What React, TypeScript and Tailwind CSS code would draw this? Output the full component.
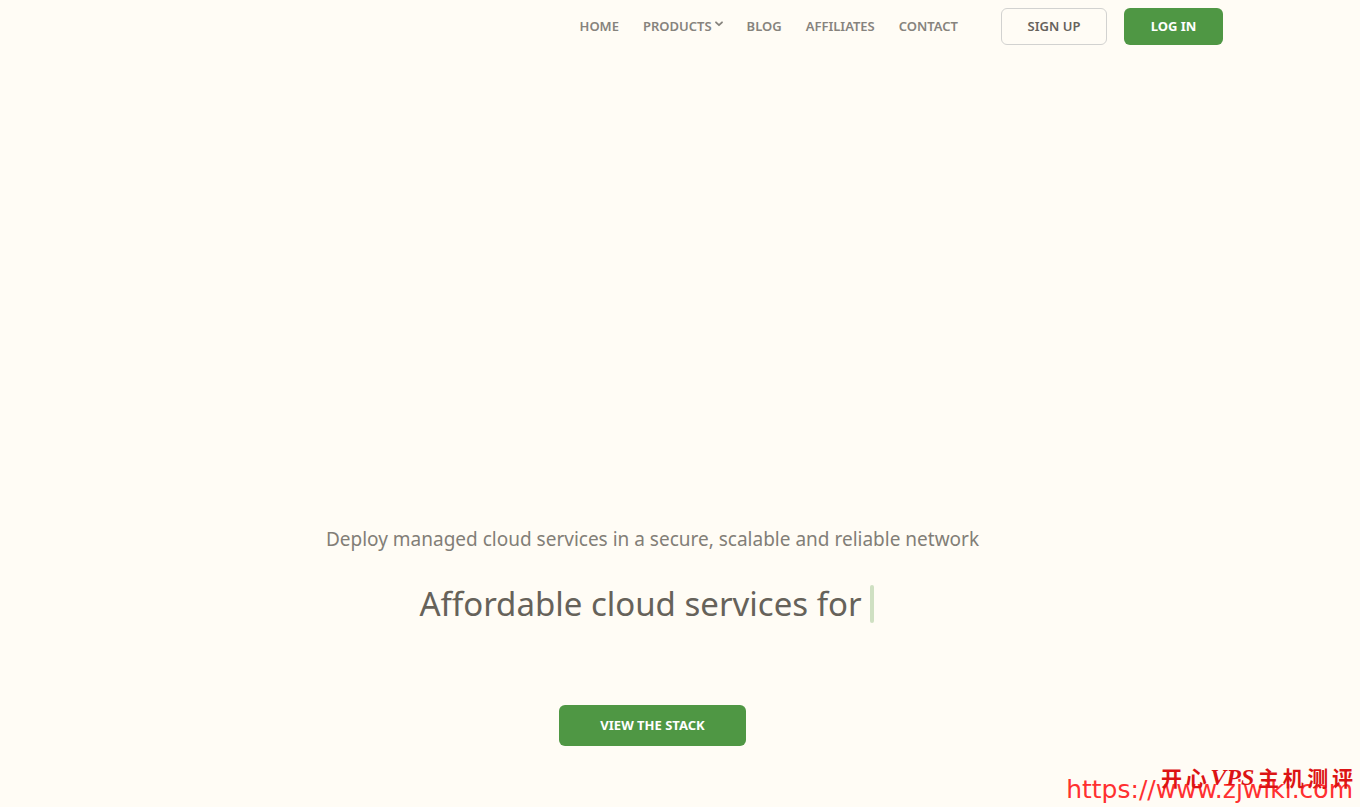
const links = [
  { label: "Home", href: "#home" },
  { label: "Products", href: "#products", menu: true },
  { label: "Blog", href: "#blog" },
  { label: "Affiliates", href: "#affiliates" },
  { label: "Contact", href: "#contact" },
];

export default function App() {
  return (
    <div className="relative flex min-h-screen flex-col overflow-hidden bg-[#fffcf5] font-['Noto_Sans',sans-serif]">
      <Header />
      <Hero />
      <Watermark />
    </div>
  );
}

/* ---------------- HEADER ---------------- */
function Header() {
  return (
    <header className="flex items-start justify-end pt-2 pr-[137px]">
      <nav className="mr-[43px] flex items-center gap-6 pt-2">
        {links.map((link) => (
          <a
            key={link.label}
            href={link.href}
            className="flex items-start gap-[3px] text-[13px] leading-5 font-semibold text-[#86837d] uppercase"
          >
            {link.label}
            {link.menu && <Chevron />}
          </a>
        ))}
      </nav>

      <div className="flex items-center gap-[17px]">
        <button className="h-[37px] w-[106px] rounded-md border border-[#d2d2d0] text-[13px] font-semibold text-[#66625c] uppercase">
          Sign up
        </button>
        <button className="h-[37px] w-[99px] rounded-md bg-[#4f9744] text-[13px] font-bold text-white uppercase">
          Log in
        </button>
      </div>
    </header>
  );
}

function Chevron() {
  return (
    <svg viewBox="0 0 8 16" className="h-4 w-2" fill="none" aria-hidden="true">
      <path
        d="M1 6.3 4 9.2 7 6.3"
        stroke="currentColor"
        strokeWidth="1.8"
        strokeLinecap="round"
        strokeLinejoin="round"
      />
    </svg>
  );
}

/* ---------------- HERO ---------------- */
function Hero() {
  return (
    <main className="flex flex-1 flex-col items-center justify-end pr-[55px] pb-[61px] text-center">
      <p className="text-[19px] leading-8 text-[#827e77]">
        Deploy managed cloud services in a secure, scalable and reliable network
      </p>

      <h1 className="mt-[30px] flex items-center gap-2 pr-3 text-[33px] leading-[38px] text-[#66625a]">
        Affordable cloud services for
        <span className="h-[38px] w-1 rounded-full bg-[#cfe0c2]" />
      </h1>

      <button className="mt-[82px] h-[41px] w-[187px] rounded-md bg-[#4f9744] text-[13px] font-bold text-white uppercase">
        View the stack
      </button>
    </main>
  );
}

/* ---------------- WATERMARK ---------------- */
function Watermark() {
  return (
    <>
      <p className="absolute right-[7px] bottom-[2px] font-['DejaVu_Sans',sans-serif] text-[25px] leading-[30px] text-[#ff3030]">
        https://www.zjwiki.com
      </p>
      <p className="absolute right-[7px] bottom-4 flex w-48 items-center justify-between font-['Noto_Sans_CJK_SC',sans-serif] text-[21px] leading-7 font-bold text-[#dc1414]">
        <span>开</span>
        <span>心</span>
        <span className="font-['Liberation_Serif',serif] text-[24px] italic">VPS</span>
        <span>主</span>
        <span>机</span>
        <span>测</span>
        <span>评</span>
      </p>
    </>
  );
}
